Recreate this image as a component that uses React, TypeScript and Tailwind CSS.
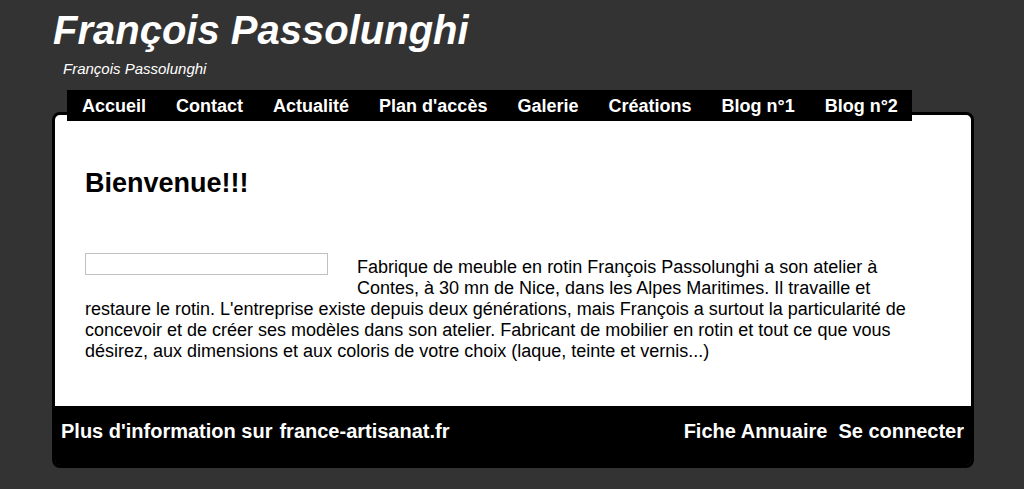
import React from 'react';

const NAV = ['Accueil', 'Contact', 'Actualité', "Plan d'accès", 'Galerie', 'Créations', 'Blog n°1', 'Blog n°2'];

export default function App() {
    return (
        <div className="min-h-[489px] bg-[#333333] font-['Liberation_Sans',Arial,sans-serif] text-white">
            <div className="pl-[52px] w-[974px] pt-[5px]">
                <h1 className="ml-[1px] text-[40px] leading-[50px] font-bold italic">François Passolunghi</h1>
                <p className="ml-[11px] mt-[5px] text-[15px] leading-[18px] italic">François Passolunghi</p>

                <nav className="relative z-10 ml-[15px] mt-[12px] w-[845px] h-[31px] bg-black flex items-start pt-[5px] pl-[15px] gap-[30px]">
                    {NAV.map((item) => (
                        <a key={item} className="text-[18px] font-bold leading-[22px]">{item}</a>
                    ))}
                </nav>

                <div className="-mt-[9px] border-[3px] border-black rounded-[8px] overflow-hidden">
                    <div className="bg-white text-black h-[291px] pl-[30px] pr-[40px] pt-[53px]">
                        <h2 className="text-[27px] leading-[30px] font-bold">Bienvenue!!!</h2>
                        <div className="mt-[55px] text-[18px] leading-[21px]">
                            <div className="float-left w-[243px] h-[22px] border border-[#c0c0c0] mr-[29px] mb-[12px]" />
                            <p className="pt-[4px]">
                                Fabrique de meuble en rotin François Passolunghi a son atelier à Contes, à 30 mn de Nice, dans les Alpes Maritimes. Il travaille et restaure le rotin. L'entreprise existe depuis deux générations, mais François a surtout la particularité de concevoir et de créer ses modèles dans son atelier. Fabricant de mobilier en rotin et tout ce que vous désirez, aux dimensions et aux coloris de votre choix (laque, teinte et vernis...)
                            </p>
                        </div>
                    </div>
                    <footer className="bg-black h-[59px] flex justify-between px-[6px] pt-[12px] text-[20px] font-bold leading-[26px]">
                        <div className="flex gap-[7px]">
                            <span>Plus d'information sur</span>
                            <a>france-artisanat.fr</a>
                        </div>
                        <div className="flex gap-[11px] pr-[1px]">
                            <a>Fiche Annuaire</a>
                            <a>Se connecter</a>
                        </div>
                    </footer>
                </div>
            </div>
        </div>
    );
}
